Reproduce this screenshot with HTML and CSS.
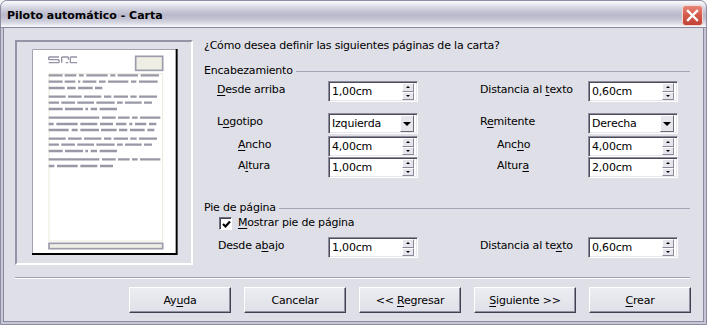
FILE: index.html
```html
<!DOCTYPE html>
<html lang="es">
<head>
    <meta charset="UTF-8">
    <title>Piloto automático - Carta</title>
    <link rel="stylesheet" href="styles.css">
</head>
<body>
    <div class="window">
        <div class="titlebar">
            <span class="title">Piloto automático - Carta</span>
            <svg class="close" width="21" height="21" viewBox="0 0 21 21">
                <defs>
                    <linearGradient id="red" x1="0" y1="0" x2="0" y2="1">
                        <stop offset="0" stop-color="#e88a7c"/>
                        <stop offset="0.5" stop-color="#d4584a"/>
                        <stop offset="1" stop-color="#c04236"/>
                    </linearGradient>
                </defs>
                <rect x="0.5" y="0.5" width="20" height="20" rx="3" fill="url(#red)" stroke="#f4d8d4"/>
                <path d="M6 6L15 15M15 6L6 15" stroke="#fff" stroke-width="2.4" stroke-linecap="square"/>
            </svg>
        </div>

        <div class="client">
            <div class="main">
                <div class="preview">
                    <svg class="page" width="146" height="206" viewBox="95 57 438 618">
                        <rect x="95" y="57" width="437" height="618" fill="#fff"/>
                        <path d="M96.5 675V58.5H531" stroke="#a4a4b0" stroke-width="3" fill="none"/>
                        <path d="M95 672H529V57" stroke="#000" stroke-width="6" fill="none"/>

                        <!-- logo -->
                        <g stroke="#9494a4" stroke-width="4" fill="none">
                            <path d="M145 81H176M184 81H204M210 81H230"/>
                            <path d="M145 81V89M176 89V98M184 81V98M204 81V89M210 81V98"/>
                            <path d="M145 89H176M145 98H176M196 98H204M210 98H230"/>
                        </g>

                        <!-- sender -->
                        <rect x="406" y="79" width="81" height="42" fill="#efeee4" stroke="#9c9cac" stroke-width="5"/>

                        <!-- body text -->
                        <rect x="146" y="131" width="341" height="502" fill="none" stroke="#eceadc" stroke-width="3"/>
                        <g stroke="#9898a6" stroke-width="7">
                            <line x1="145" x2="490" y1="136" y2="136" stroke-dasharray="42 6 35 8 14 8 64 8 15 7 61 8 55 400"/>
                            <line x1="145" x2="490" y1="155" y2="155" stroke-dasharray="42 6 32 8 7 7 41 8 20 7 61 8 16 8 56 400"/>
                            <line x1="145" x2="490" y1="174" y2="174" stroke-dasharray="48 7 26 7 44 7 22 400"/>

                            <line x1="145" x2="490" y1="200" y2="200" stroke-dasharray="51 7 41 7 52 8 22 7 43 7 19 7 54 400"/>
                            <line x1="145" x2="490" y1="218" y2="218" stroke-dasharray="31 7 41 7 50 7 55 7 17 7 50 7 24 400"/>
                            <line x1="145" x2="490" y1="237" y2="237" stroke-dasharray="42 7 54 7 8 8 19 8 52 400"/>

                            <line x1="145" x2="490" y1="263" y2="263" stroke-dasharray="152 8 41 7 35 7 17 7 61 400"/>
                            <line x1="145" x2="490" y1="282" y2="282" stroke-dasharray="15 8 64 8 51 8 39 9 31 9 9 8 34 8 22 400"/>
                            <line x1="145" x2="490" y1="300" y2="300" stroke-dasharray="60 9 18 8 56 6 47 7 25 8 44 8 21 400"/>

                            <line x1="145" x2="490" y1="326" y2="326" stroke-dasharray="51 7 41 7 52 8 22 7 43 7 19 7 54 400"/>
                            <line x1="145" x2="490" y1="344" y2="344" stroke-dasharray="31 7 41 7 50 7 55 7 17 7 50 7 24 400"/>
                            <line x1="145" x2="490" y1="363" y2="363" stroke-dasharray="42 7 54 7 8 8 19 8 52 400"/>

                            <line x1="145" x2="490" y1="388" y2="388" stroke-dasharray="152 8 41 7 35 7 17 7 61 400"/>
                            <line x1="145" x2="490" y1="408" y2="408" stroke-dasharray="17 8 62 8 51 8 39 400"/>
                        </g>

                        <!-- footer -->
                        <rect x="146" y="640" width="341" height="16" fill="#efeee4" stroke="#9c9cac" stroke-width="5"/>
                    </svg>
                </div>

                <div class="form">
                    <p class="question">¿Cómo desea definir las siguientes páginas de la carta?</p>

                    <div class="group">Encabezamiento</div>

                    <div class="row r1">
                        <span class="lbl"><u>D</u>esde arriba</span>
                        <div class="field"><span class="val">1,00cm</span><span class="spin"><i class="up"></i><i class="down"></i></span></div>
                        <span class="lbl r">Distancia al <u>t</u>exto</span>
                        <div class="field"><span class="val">0,60cm</span><span class="spin"><i class="up"></i><i class="down"></i></span></div>
                    </div>

                    <div class="row r2">
                        <span class="lbl">L<u>o</u>gotipo</span>
                        <div class="field"><span class="val">Izquierda</span><span class="dropbtn"></span></div>
                        <span class="lbl r">R<u>e</u>mitente</span>
                        <div class="field"><span class="val">Derecha</span><span class="dropbtn"></span></div>
                    </div>

                    <div class="row r3">
                        <span class="lbl ind"><u>A</u>ncho</span>
                        <div class="field"><span class="val">4,00cm</span><span class="spin"><i class="up"></i><i class="down"></i></span></div>
                        <span class="lbl r ind">Anc<u>h</u>o</span>
                        <div class="field"><span class="val">4,00cm</span><span class="spin"><i class="up"></i><i class="down"></i></span></div>
                    </div>

                    <div class="row r4">
                        <span class="lbl ind">A<u>l</u>tura</span>
                        <div class="field"><span class="val">1,00cm</span><span class="spin"><i class="up"></i><i class="down"></i></span></div>
                        <span class="lbl r ind">Altur<u>a</u></span>
                        <div class="field"><span class="val">2,00cm</span><span class="spin"><i class="up"></i><i class="down"></i></span></div>
                    </div>

                    <div class="group g2">Pie de página</div>

                    <div class="check-row">
                        <span class="checkbox">
                            <svg width="9" height="9" viewBox="0 0 9 9"><path d="M1 4L3.5 6.5L8 1.5" stroke="#000" stroke-width="2.2" fill="none"/></svg>
                        </span>
                        <span class="check-lbl"><u>M</u>ostrar pie de página</span>
                    </div>

                    <div class="row r5">
                        <span class="lbl low">Desde a<u>b</u>ajo</span>
                        <div class="field"><span class="val">1,00cm</span><span class="spin"><i class="up"></i><i class="down"></i></span></div>
                        <span class="lbl r">Distancia al te<u>x</u>to</span>
                        <div class="field"><span class="val">0,60cm</span><span class="spin"><i class="up"></i><i class="down"></i></span></div>
                    </div>
                </div>
            </div>

            <div class="sep"></div>

            <div class="buttons">
                <button class="btn">Ay<u>u</u>da</button>
                <button class="btn">Cancelar</button>
                <button class="btn">&lt;&lt; <u>R</u>egresar</button>
                <button class="btn"><u>S</u>iguiente &gt;&gt;</button>
                <button class="btn"><u>C</u>rear</button>
            </div>
        </div>
    </div>
</body>
</html>
```

FILE: styles.css
```css
body {
    margin: 0;
    background-color: #f4f4f6;
    font-family: "DejaVu Sans", sans-serif;
    font-size: 11px;
    letter-spacing: -0.2px;
    color: #000;
}

u {
    text-decoration-thickness: 1px;
    text-underline-offset: 2px;
}

.window {
    width: 707px;
    height: 325px;
    box-sizing: border-box;
    border: 1px solid #8c8ca2;
    border-radius: 7px 7px 0 0;
    overflow: hidden;
    background-color: #c6c6d4;
    display: flex;
    flex-direction: column;
}

.titlebar {
    flex: none;
    height: 27px;
    box-sizing: border-box;
    border-bottom: 1px solid #8888a0;
    background: linear-gradient(#fdfdfe 0, #ebebf1 3px, #cbcbd9 9px, #b9b9cb 14px, #c3c3d3 18px, #e0e0e9 23px, #f7f7f9 25px);
    display: flex;
    align-items: flex-start;
    justify-content: space-between;
    padding: 0 3px 0 6px;
}

.title {
    font-weight: bold;
    line-height: 14px;
    padding-top: 8px;
    letter-spacing: 0;
}

.close {
    margin-top: 4px;
}

.client {
    flex: 1;
    margin: 0 2px 2px;
    border: 1px solid #8a8aa0;
    border-top: 0;
    background-color: #dfdfe7;
    padding: 12px 13px 0 11px;
    display: flex;
    flex-direction: column;
}

.main {
    display: flex;
    gap: 11px;
    height: 225px;
}

.preview {
    flex: none;
    width: 178px;
    height: 225px;
    box-sizing: border-box;
    border: 2px solid;
    border-color: #9494a6 #fff #fff #9494a6;
    padding: 7px 0 0 15px;
}

.page {
    display: block;
}

.form {
    flex: 1;
}

.question {
    margin: -1px 0 0;
    line-height: 14px;
}

.group {
    display: flex;
    align-items: center;
    margin-top: 11px;
    line-height: 14px;
}

.group::after {
    content: "";
    flex: 1;
    margin: 1px 0 0 3px;
    border-top: 1px solid #a4a4b4;
}

.group.g2 {
    margin-top: 23px;
}

.row {
    display: grid;
    grid-template-columns: 124px 90px 62px 108px 90px;
    height: 21px;
}

.r1 { margin-top: 3px; }
.r2 { margin-top: 11px; }
.r3 { margin-top: 2px; }
.r4 { margin-top: 0; }
.r5 { margin-top: 6px; }

.lbl {
    padding: 2px 0 0 13px;
    line-height: 14px;
    white-space: nowrap;
}

.lbl.ind {
    padding-left: 34px;
}

.lbl.low {
    padding-left: 14px;
}

.lbl.r {
    grid-column: 4;
    padding-left: 0;
}

.lbl.r.ind {
    padding-left: 17px;
}

.field {
    box-sizing: border-box;
    height: 21px;
    border: 1px solid;
    border-color: #8c8c9c #fff #fff #8c8c9c;
    box-shadow: inset 1px 1px 0 #4c4c5c, inset -1px -1px 0 #e6e6ec;
    background-color: #fff;
    display: flex;
    align-items: center;
    padding: 2px 3px 2px 2px;
}

.val {
    flex: 1;
    padding-left: 1px;
    line-height: 14px;
    padding-top: 1px;
}

.spin {
    flex: none;
    width: 12px;
    height: 17px;
    display: flex;
    flex-direction: column;
}

.spin i {
    flex: 1;
    box-sizing: border-box;
    background-color: #e6e6ec;
    border: 1px solid;
    border-color: #fff #8a8a9a #8a8a9a #fff;
    display: flex;
    align-items: center;
    justify-content: center;
}

.spin i::before {
    content: "";
    border-left: 2px solid transparent;
    border-right: 2px solid transparent;
}

.spin .up::before {
    border-bottom: 2px solid #000;
}

.spin .down::before {
    border-top: 2px solid #000;
}

.dropbtn {
    flex: none;
    width: 14px;
    height: 17px;
    box-sizing: border-box;
    background-color: #e6e6ec;
    border: 1px solid;
    border-color: #fff #6a6a7a #6a6a7a #fff;
    display: flex;
    align-items: center;
    justify-content: center;
}

.dropbtn::before {
    content: "";
    border-left: 4px solid transparent;
    border-right: 4px solid transparent;
    border-top: 4px solid #000;
    margin-top: 1px;
}

.check-row {
    display: flex;
    gap: 6px;
    padding-left: 15px;
    height: 16px;
}

.checkbox {
    width: 13px;
    height: 13px;
    box-sizing: border-box;
    margin-top: 2px;
    border: 1px solid;
    border-color: #707080 #fff #fff #707080;
    box-shadow: inset 1px 1px 0 #404050;
    background-color: #fff;
    display: flex;
    align-items: center;
    justify-content: center;
}

.checkbox svg {
    display: block;
    margin: 1px 0 0 1px;
}

.check-lbl {
    line-height: 14px;
    padding-top: 1px;
}

.sep {
    margin-top: 12px;
    border-top: 1px solid #a0a0b0;
    border-bottom: 1px solid #fff;
}

.buttons {
    display: flex;
    justify-content: flex-end;
    gap: 13px;
    margin: 8px -1px 0 0;
}

.btn {
    width: 102px;
    height: 26px;
    box-sizing: border-box;
    font-family: inherit;
    font-size: 11px;
    letter-spacing: inherit;
    color: #000;
    background: linear-gradient(#ececf2, #e0e0e8);
    border: 1px solid;
    border-color: #fff #404050 #404050 #fff;
    box-shadow: inset -1px -1px 0 #9090a0;
    padding: 0;
}
```
